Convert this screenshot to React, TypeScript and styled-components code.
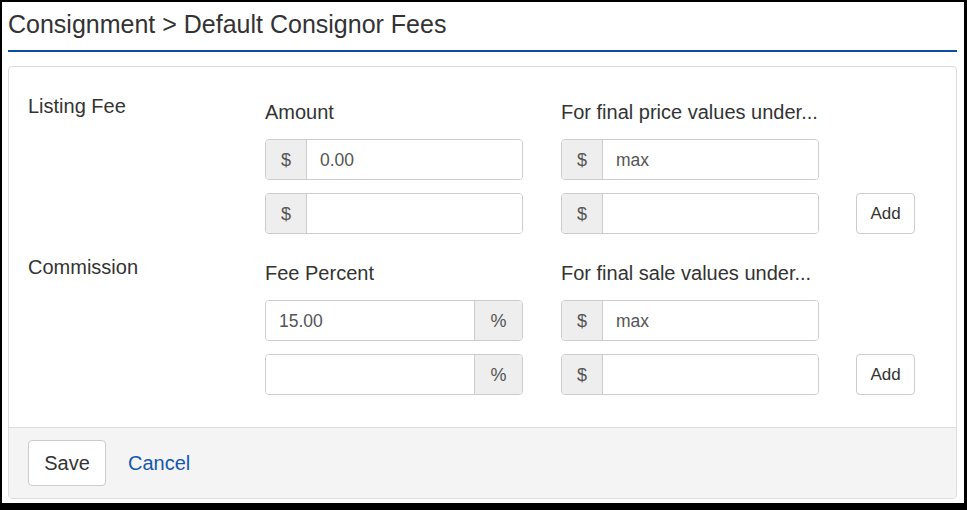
import styled, { createGlobalStyle } from "styled-components";

const GlobalStyle = createGlobalStyle`
    html, body {
        margin: 0;
        padding: 0;
        background: #000;
    }
    body {
        font-family: "Liberation Sans", Arial, sans-serif;
        color: #333;
    }
`;

const Page = styled.div`
    background: #fff;
    margin: 2px 3px 7px 2px;
    height: 501px;
    padding: 7px 7px 0 6px;
    box-sizing: border-box;
`;

const Title = styled.h3`
    margin: 0;
    font-size: 25px;
    font-weight: normal;
    line-height: 30px;
    padding-bottom: 11px;
    border-bottom: 2px solid #0b4ea3;
    color: #333;
`;

const Panel = styled.div`
    margin-top: 14px;
    border: 1px solid #ddd;
    border-radius: 4px;
    overflow: hidden;
`;

const PanelBody = styled.div`
    padding: 27px 19px 32px 19px;
    display: flex;
    flex-direction: column;
    gap: 21px;
`;

const Section = styled.div`
    display: flex;
    align-items: flex-start;
`;

const SectionLabel = styled.div`
    width: 237px;
    flex: none;
    font-size: 20px;
    line-height: 24px;
`;

const Fields = styled.div`
    display: grid;
    grid-template-columns: 296px 295px auto;
    row-gap: 13px;
    align-items: center;
`;

const ColHead = styled.div`
    font-size: 20px;
    line-height: 24px;
    padding-top: 6px;
    padding-bottom: 2px;
`;

const Group = styled.div`
    display: flex;
    width: 258px;
    height: 41px;
    box-sizing: border-box;
    border: 1px solid #ccc;
    border-radius: 4px;
    overflow: hidden;
    background: #fff;
`;

const Addon = styled.span<{ $side: "left" | "right" }>`
    flex: none;
    width: ${(p) => (p.$side === "left" ? "41px" : "48px")};
    display: flex;
    align-items: center;
    justify-content: center;
    padding-top: 2px;
    box-sizing: border-box;
    background: #eee;
    color: #555;
    font-size: 18px;
    ${(p) => (p.$side === "left" ? "border-right: 1px solid #ccc;" : "border-left: 1px solid #ccc;")}
`;

const Field = styled.input`
    flex: 1;
    min-width: 0;
    border: none;
    outline: none;
    padding: 2px 13px 0 13px;
    font-family: "Liberation Sans", Arial, sans-serif;
    font-size: 17.5px;
    color: #555;
    background: #fff;
`;

const Button = styled.button<{ $big?: boolean }>`
    font-family: "Liberation Sans", Arial, sans-serif;
    background: #fff;
    color: #333;
    border: 1px solid #ccc;
    border-radius: 4px;
    cursor: pointer;
    font-size: ${(p) => (p.$big ? "20px" : "17px")};
    width: ${(p) => (p.$big ? "78px" : "59px")};
    height: ${(p) => (p.$big ? "46px" : "41px")};
    padding: 1px 0 0 0;
`;

const Footer = styled.div`
    background: #f4f4f4;
    border-top: 1px solid #ddd;
    padding: 12px 19px;
    display: flex;
    align-items: center;
    gap: 22px;
`;

const CancelLink = styled.a`
    color: #1558b0;
    font-size: 20px;
    text-decoration: none;
    cursor: pointer;
`;

const Money = ({ value }: { value?: string }) => (
    <Group>
        <Addon $side="left">$</Addon>
        <Field defaultValue={value} />
    </Group>
);

const Percent = ({ value }: { value?: string }) => (
    <Group>
        <Field defaultValue={value} />
        <Addon $side="right">%</Addon>
    </Group>
);

const FeeSection = (props: any) => {
    const Left = props.percent ? Percent : Money;
    return (
        <Section>
            <SectionLabel>{props.label}</SectionLabel>
            <Fields>
                <ColHead>{props.first}</ColHead>
                <ColHead>{props.second}</ColHead>
                <div />
                <Left value={props.value} />
                <Money value="max" />
                <div />
                <Left />
                <Money />
                <div>
                    <Button>Add</Button>
                </div>
            </Fields>
        </Section>
    );
};

export default function App() {
    return (
        <>
            <GlobalStyle />
            <Page>
                <Title>Consignment &gt; Default Consignor Fees</Title>
                <Panel>
                    <PanelBody>
                        <FeeSection
                            label="Listing Fee"
                            first="Amount"
                            second="For final price values under..."
                            value="0.00"
                        />
                        <FeeSection
                            label="Commission"
                            first="Fee Percent"
                            second="For final sale values under..."
                            value="15.00"
                            percent
                        />
                    </PanelBody>
                    <Footer>
                        <Button $big>Save</Button>
                        <CancelLink>Cancel</CancelLink>
                    </Footer>
                </Panel>
            </Page>
        </>
    );
}
